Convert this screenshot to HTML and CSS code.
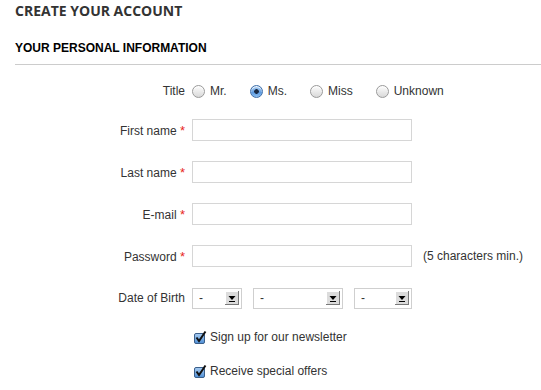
FILE: index.html
```html
<!DOCTYPE html>
<html lang="en-US">

<head>
	<title>Create your account</title>
	<meta charset="utf-8">
	<meta name="viewport" content="width=device-width, initial-scale=1.0">
	<link rel="stylesheet" href="styles.css">
</head>

<body>

	<h1 class="page-title">Create your account</h1>

	<form class="account-form">
		<h2 class="section-title">Your personal information</h2>

		<!-- Title -->
		<div class="row row-title">
			<span class="label">Title</span>
			<div class="field radios">
				<label class="radio"><input type="radio" name="gender" value="mr"> Mr.</label>
				<label class="radio"><input type="radio" name="gender" value="ms" checked> Ms.</label>
				<label class="radio"><input type="radio" name="gender" value="miss"> Miss</label>
				<label class="radio"><input type="radio" name="gender" value="unknown"> Unknown</label>
			</div>
		</div>

		<div class="row">
			<label class="label" for="firstname">First name <sup class="required">*</sup></label>
			<div class="field"><input class="text" type="text" id="firstname"></div>
		</div>

		<div class="row">
			<label class="label" for="lastname">Last name <sup class="required">*</sup></label>
			<div class="field"><input class="text" type="text" id="lastname"></div>
		</div>

		<div class="row row-shift">
			<label class="label" for="email">E-mail <sup class="required">*</sup></label>
			<div class="field"><input class="text" type="text" id="email"></div>
		</div>

		<div class="row">
			<label class="label" for="passwd">Password <sup class="required">*</sup></label>
			<div class="field">
				<input class="text" type="password" id="passwd">
				<span class="hint">(5 characters min.)</span>
			</div>
		</div>

		<!-- Date of birth -->
		<div class="row row-shift">
			<span class="label">Date of Birth</span>
			<div class="field selects">
				<div class="select select-day">
					<select><option>-</option></select>
					<svg class="arrow" viewBox="0 0 14 14" width="14" height="14">
						<rect x="0" y="0" width="14" height="14" fill="#dcdcdc"/>
						<path d="M0 0H14M0 0V14" stroke="#fff" stroke-width="2"/>
						<path d="M14 0V14H0" stroke="#7a7a7a" stroke-width="2" fill="none"/>
						<path d="M3.5 5H10.5L7 9Z" fill="#000"/>
						<path d="M4 10.5H10" stroke="#000" stroke-width="1"/>
					</svg>
				</div>
				<div class="select select-month">
					<select><option>-</option></select>
					<svg class="arrow" viewBox="0 0 14 14" width="14" height="14">
						<rect x="0" y="0" width="14" height="14" fill="#dcdcdc"/>
						<path d="M0 0H14M0 0V14" stroke="#fff" stroke-width="2"/>
						<path d="M14 0V14H0" stroke="#7a7a7a" stroke-width="2" fill="none"/>
						<path d="M3.5 5H10.5L7 9Z" fill="#000"/>
						<path d="M4 10.5H10" stroke="#000" stroke-width="1"/>
					</svg>
				</div>
				<div class="select select-year">
					<select><option>-</option></select>
					<svg class="arrow" viewBox="0 0 14 14" width="14" height="14">
						<rect x="0" y="0" width="14" height="14" fill="#dcdcdc"/>
						<path d="M0 0H14M0 0V14" stroke="#fff" stroke-width="2"/>
						<path d="M14 0V14H0" stroke="#7a7a7a" stroke-width="2" fill="none"/>
						<path d="M3.5 5H10.5L7 9Z" fill="#000"/>
						<path d="M4 10.5H10" stroke="#000" stroke-width="1"/>
					</svg>
				</div>
			</div>
		</div>

		<!-- Checkboxes -->
		<div class="row row-check">
			<span class="label"></span>
			<label class="field check">
				<svg class="checkbox" viewBox="0 0 14 14" width="14" height="14">
					<defs>
						<linearGradient id="cb" x1="0" y1="0" x2="0" y2="1">
							<stop offset="0" stop-color="#a9cdf2"/>
							<stop offset="1" stop-color="#4f8fd6"/>
						</linearGradient>
					</defs>
					<rect x="1.5" y="3.5" width="10" height="10" rx="1.5" fill="url(#cb)" stroke="#3b5f8a"/>
					<path d="M3.5 7.5L6 11L12.5 1.5" stroke="#111" stroke-width="2" fill="none"/>
				</svg>
				Sign up for our newsletter
			</label>
		</div>

		<div class="row row-check">
			<span class="label"></span>
			<label class="field check">
				<svg class="checkbox" viewBox="0 0 14 14" width="14" height="14">
					<rect x="1.5" y="3.5" width="10" height="10" rx="1.5" fill="url(#cb)" stroke="#3b5f8a"/>
					<path d="M3.5 7.5L6 11L12.5 1.5" stroke="#111" stroke-width="2" fill="none"/>
				</svg>
				Receive special offers
			</label>
		</div>
	</form>

</body>

</html>
```

FILE: styles.css
```css
/**
 * Base
 */
*,
*:before,
*:after {
	box-sizing: border-box;
}

body {
	margin: 0;
	padding: 0 0 0 15px;
	background: #fff;
	color: #333;
	font-family: "Liberation Sans", Arial, sans-serif;
	font-size: 12px;
}

/**
 * Headings
 */
.page-title {
	margin: 1px 0 0;
	font-family: "Open Sans", sans-serif;
	font-size: 14px;
	font-weight: bold;
	line-height: 20px;
	color: #333;
	text-transform: uppercase;
}

.section-title {
	margin: 20px 0 15px;
	padding-bottom: 9px;
	border-bottom: 1px solid #ccc;
	font-size: 12px;
	font-weight: bold;
	line-height: 14px;
	color: #000;
	text-transform: uppercase;
}

/**
 * Form rows
 */
.row {
	display: grid;
	grid-template-columns: 170px 1fr;
	column-gap: 7px;
	align-items: center;
	min-height: 22px;
	margin-bottom: 20px;
}

.row-title {
	margin-bottom: 17px;
}

.row-shift {
	margin-top: 1px;
}

.label {
	text-align: right;
	white-space: nowrap;
}

.required {
	color: #e8261c;
	font-size: 13px;
	vertical-align: baseline;
}

.field {
	display: flex;
	align-items: center;
}

.text {
	width: 220px;
	height: 22px;
	margin: 0;
	border: 1px solid #d6d6d6;
	padding: 2px 4px;
	font: inherit;
}

.hint {
	margin-left: 11px;
}

/**
 * Radios
 */
.radio {
	display: flex;
	align-items: center;
	margin-right: 23px;
	margin-left: 0;
}

.radio input {
	appearance: none;
	-webkit-appearance: none;
	width: 13px;
	height: 13px;
	margin: 0 5px 0 0;
	border: 1px solid #9a9a9a;
	border-radius: 50%;
	background: linear-gradient(#fdfdfd, #d9d9d9);
	box-shadow: inset 0 1px 1px rgba(255, 255, 255, 0.9);
}

.radio input:checked {
	border-color: #3f6ea8;
	background: radial-gradient(circle at 50% 50%, #1a2a44 0, #1a2a44 2px, transparent 2.6px),
		linear-gradient(#b7d6f5, #5c9ae0 60%, #8fc0f0);
}

/**
 * Selects
 */
.selects {
	gap: 11px;
}

.select {
	display: flex;
	align-items: center;
	height: 21px;
	border: 1px solid #cfcfcf;
	padding: 0 2px 0 0;
	background: #fff;
}

.select select {
	appearance: none;
	-webkit-appearance: none;
	flex: 1;
	min-width: 0;
	height: 19px;
	border: 0;
	padding: 0 0 0 6px;
	background: transparent;
	font: inherit;
	color: #333;
}

.select-day {
	width: 50px;
}

.select-month {
	width: 90px;
}

.select-year {
	width: 58px;
}

.arrow {
	flex: none;
	display: block;
}

/**
 * Checkboxes
 */
.row-check {
	min-height: 16px;
	margin-top: 2px;
	margin-bottom: 18px;
}

.check {
	gap: 3px;
}

.checkbox {
	flex: none;
	margin-left: 1px;
}
```
